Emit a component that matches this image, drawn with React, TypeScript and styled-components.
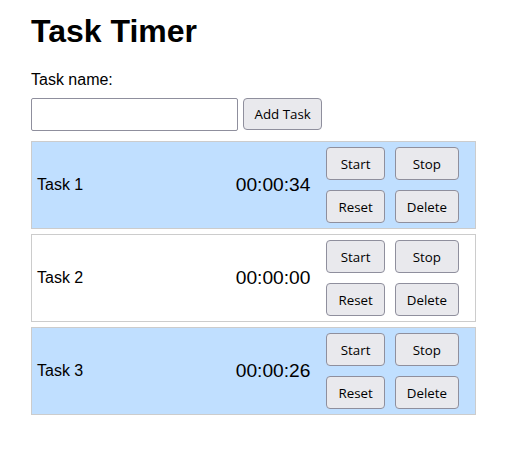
import React, { useState } from 'react';
import styled, { createGlobalStyle } from 'styled-components';

const GlobalStyle = createGlobalStyle`
  body {
    margin: 0;
    background: #ffffff;
    font-family: "Liberation Sans", Arial, sans-serif;
    color: #000000;
  }
`;

const Page = styled.div`
  width: 445px;
  padding: 0 31px;
`;

const Title = styled.h1`
  font-size: 32px;
  font-weight: 700;
  line-height: 37px;
  margin: 13px 0 21px;
`;

const Label = styled.label`
  display: block;
  font-size: 16px;
  line-height: 18px;
  margin-bottom: 9px;
`;

const Form = styled.div`
  display: flex;
  align-items: flex-start;
  gap: 5px;
  margin-bottom: 10px;
`;

const NameInput = styled.input`
  box-sizing: border-box;
  width: 207px;
  height: 33px;
  padding: 0 6px;
  border: 1px solid #8f8f9d;
  border-radius: 2px;
  font-family: "Liberation Sans", Arial, sans-serif;
  font-size: 16px;
  outline: none;
`;

const Button = styled.button`
  box-sizing: border-box;
  height: 33px;
  padding: 0 11px;
  background: #e9e9ed;
  border: 1px solid #8f8f9d;
  border-radius: 4px;
  font-family: "Open Sans", "Noto Sans", sans-serif;
  font-size: 13.33px;
  color: #000000;
  cursor: pointer;
`;

const AddButton = styled(Button)`
  height: 32px;
  padding: 0 10.5px;
`;

const List = styled.div`
  display: flex;
  flex-direction: column;
  gap: 5px;
`;

const Row = styled.div<{ $running: boolean }>`
  display: flex;
  align-items: center;
  gap: 16px;
  padding: 5px 16px 5px 5px;
  border: 1px solid #cccccc;
  background: ${p => (p.$running ? '#c0dfff' : '#ffffff')};
`;

const TaskName = styled.span`
  flex: 1;
  font-size: 16px;
`;

const Time = styled.span`
  font-size: 19.2px;
`;

const Controls = styled.div`
  display: grid;
  grid-template-columns: auto auto;
  gap: 10px;
`;

type Task = { id: number; name: string; seconds: number };

const fmt = (s: number) => {
  const h = Math.floor(s / 3600);
  const m = Math.floor((s % 3600) / 60);
  const sec = s % 60;
  return [h, m, sec].map(n => String(n).padStart(2, '0')).join(':');
};

const App: React.FC = () => {
  const [name, setName] = useState('');
  const [tasks, setTasks] = useState<Task[]>([
    { id: 1, name: 'Task 1', seconds: 34 },
    { id: 2, name: 'Task 2', seconds: 0 },
    { id: 3, name: 'Task 3', seconds: 26 },
  ]);

  const addTask = () => {
    if (!name.trim()) return;
    setTasks([...tasks, { id: Date.now(), name: name.trim(), seconds: 0 }]);
    setName('');
  };

  const reset = (id: number) =>
    setTasks(tasks.map(t => (t.id === id ? { ...t, seconds: 0 } : t)));

  const remove = (id: number) => setTasks(tasks.filter(t => t.id !== id));

  return (
    <>
      <GlobalStyle />
      <Page>
        <Title>Task Timer</Title>
        <Label htmlFor="task-name">Task name:</Label>
        <Form>
          <NameInput
            id="task-name"
            value={name}
            onChange={e => setName(e.target.value)}
          />
          <AddButton onClick={addTask}>Add Task</AddButton>
        </Form>
        <List>
          {tasks.map(task => (
            <Row key={task.id} $running={task.seconds > 0}>
              <TaskName>{task.name}</TaskName>
              <Time>{fmt(task.seconds)}</Time>
              <Controls>
                <Button>Start</Button>
                <Button>Stop</Button>
                <Button onClick={() => reset(task.id)}>Reset</Button>
                <Button onClick={() => remove(task.id)}>Delete</Button>
              </Controls>
            </Row>
          ))}
        </List>
      </Page>
    </>
  );
};

export default App;
